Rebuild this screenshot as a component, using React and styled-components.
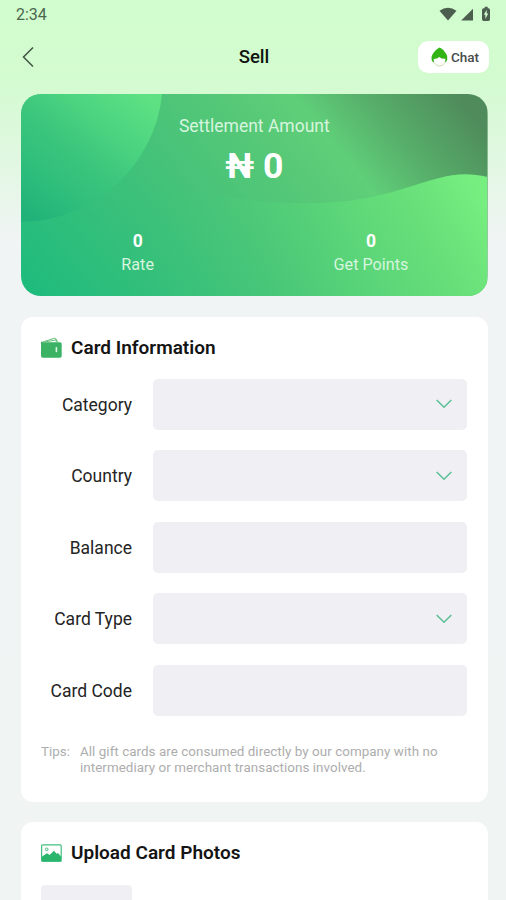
import React from "react";
import styled, { createGlobalStyle } from "styled-components";

const GlobalStyle = createGlobalStyle`
  * { box-sizing: border-box; }
  body {
    margin: 0;
    background: #f0f4f3;
    font-family: Roboto, "Liberation Sans", sans-serif;
    overflow: hidden;
  }
`;

const Screen = styled.div`
  height: 900px;
  overflow: hidden;
  background: linear-gradient(180deg, #d1fdcd 0, #d3fbd0 80px, #f0f4f4 240px, #f0f4f3 100%);
`;

const StatusBar = styled.div`
  height: 30px;
  display: flex;
  align-items: center;
  justify-content: space-between;
  padding: 0 15px 1px 16px;
  color: #4c6650;
  font-size: 16px;
`;

const StatusIcons = styled.svg`
  width: 54px;
  height: 18px;
  display: block;
`;

const Header = styled.header`
  height: 64px;
  display: grid;
  grid-template-columns: 100px 1fr 100px;
  align-items: center;
  padding: 0 17px 10px 20px;
`;

const BackIcon = styled.svg`
  width: 16px;
  height: 22px;
  display: block;
`;

const Title = styled.h1`
  margin: 0;
  padding-right: 1px;
  text-align: center;
  font-size: 18.6px;
  line-height: 22px;
  font-weight: 500;
  color: #101510;
`;

const ChatButton = styled.button`
  justify-self: end;
  width: 71px;
  height: 32px;
  border: 0;
  border-radius: 10px;
  background: #fff;
  display: flex;
  align-items: center;
  gap: 3px;
  padding: 0 0 0 13px;
  font: 500 13.5px Roboto, sans-serif;
  color: #474b4a;
`;

const ChatIcon = styled.svg`
  width: 17px;
  height: 20px;
  flex: none;
`;

const Amount = styled.section`
  position: relative;
  margin: 0 18.4px 0 21px;
  height: 202px;
  border-radius: 20px;
  overflow: hidden;
  color: #fff;
`;

const Backdrop = styled.svg`
  position: absolute;
  inset: 0;
  width: 100%;
  height: 100%;
`;

const AmountContent = styled.div`
  position: relative;
  text-align: center;
  padding-top: 21px;
`;

const AmountLabel = styled.div`
  font-size: 17.5px;
  line-height: 22px;
  color: #d7f5df;
`;

const AmountValue = styled.div`
  margin-top: 8px;
  font-size: 35.6px;
  line-height: 43px;
  font-weight: 700;
`;

const Stats = styled.div`
  margin-top: 41px;
  display: grid;
  grid-template-columns: 1fr 1fr;
`;

const StatValue = styled.div`
  font-size: 17.5px;
  line-height: 24px;
  font-weight: 700;
`;

const StatLabel = styled.div`
  font-size: 16.2px;
  line-height: 23px;
  color: #d7f5df;
`;

const Panel = styled.section`
  margin: ${(p) => p.$gap}px 18.4px 0 21px;
  height: ${(p) => p.$height}px;
  padding: 18px 20.6px 0 20px;
  background: #fff;
  border-radius: 12px;
`;

const PanelHeading = styled.div`
  display: flex;
  align-items: center;
  gap: 9px;
  height: 25px;
`;

const PanelIcon = styled.svg`
  width: 21px;
  height: 22px;
  flex: none;
`;

const PanelTitle = styled.h2`
  margin: 0;
  font-size: 19px;
  line-height: 25px;
  font-weight: 600;
  white-space: nowrap;
  color: #141414;
`;

const Fields = styled.div`
  display: grid;
  gap: 20.5px;
  margin-top: 18.5px;
`;

const FieldRow = styled.label`
  display: grid;
  grid-template-columns: 91px 1fr;
  column-gap: 21px;
  align-items: center;
  height: 51px;
  font-size: 17.5px;
  color: #242424;
  text-align: right;
`;

const FieldLabel = styled.span`
  padding-top: 1px;
`;

const FieldBox = styled.div`
  height: 51px;
  border-radius: 5px;
  background: #f0eff4;
  display: flex;
  align-items: center;
  justify-content: flex-end;
  padding-right: 14.6px;
`;

const Chevron = styled.svg`
  width: 16px;
  height: 10px;
`;

const Tips = styled.div`
  display: flex;
  margin-top: 28px;
  font-size: 13.4px;
  line-height: 16px;
  color: #adadad;
`;

const TipsLabel = styled.span`
  width: 39px;
  flex: none;
`;

const TipsText = styled.div`
  white-space: nowrap;
  letter-spacing: 0.05px;
`;

const UploadSlot = styled.div`
  width: 91px;
  height: 91px;
  margin-top: 20px;
  border-radius: 4px;
  background: #f0eff4;
`;

const fields = [
  { label: "Category", select: true },
  { label: "Country", select: true },
  { label: "Balance", select: false },
  { label: "Card Type", select: true },
  { label: "Card Code", select: false },
];

function CardBackdrop() {
  return (
    <Backdrop viewBox="0 0 467 202" preserveAspectRatio="none">
      <defs>
        <linearGradient id="base" gradientUnits="userSpaceOnUse" x1="0" y1="202" x2="376" y2="-111">
          <stop offset="0" stopColor="#1dbb7d" />
          <stop offset="0.42" stopColor="#48c379" />
          <stop offset="0.6" stopColor="#58c977" />
          <stop offset="0.69" stopColor="#5fcf79" />
          <stop offset="0.8" stopColor="#57af6a" />
          <stop offset="0.95" stopColor="#4f8b5b" />
        </linearGradient>
        <linearGradient id="wave" gradientUnits="userSpaceOnUse" x1="0" y1="202" x2="388" y2="-26">
          <stop offset="0" stopColor="#1dbb7d" />
          <stop offset="0.48" stopColor="#49c878" />
          <stop offset="0.85" stopColor="#68df79" />
          <stop offset="1" stopColor="#77ef80" />
        </linearGradient>
        <linearGradient id="orb" gradientUnits="userSpaceOnUse" x1="15" y1="128" x2="115" y2="-5">
          <stop offset="0" stopColor="#20b279" />
          <stop offset="1" stopColor="#5de183" />
        </linearGradient>
        <linearGradient id="orbEdge" gradientUnits="userSpaceOnUse" x1="30" y1="125" x2="141" y2="0">
          <stop offset="0" stopColor="#fff" />
          <stop offset="0.35" stopColor="#999" />
          <stop offset="0.6" stopColor="#fff" />
        </linearGradient>
        <linearGradient id="fade" gradientUnits="userSpaceOnUse" x1="100" y1="0" x2="330" y2="0">
          <stop offset="0" stopColor="#000" />
          <stop offset="1" stopColor="#fff" />
        </linearGradient>
        <mask id="waveMask" maskUnits="userSpaceOnUse" x="0" y="0" width="467" height="202">
          <rect width="467" height="202" fill="url(#fade)" />
        </mask>
        <mask id="orbMask" maskUnits="userSpaceOnUse" x="0" y="0" width="467" height="202">
          <rect width="467" height="202" fill="url(#orbEdge)" />
        </mask>
      </defs>
      <rect width="467" height="202" fill="url(#base)" />
      <path
        d="M0 100C90 80 170 100 250 108C320 112 352 104 385 94C420 83 438 76 467 83V202H0Z"
        fill="url(#wave)"
        mask="url(#waveMask)"
      />
      <circle cx="-1" cy="-15" r="143" fill="url(#orb)" mask="url(#orbMask)" />
    </Backdrop>
  );
}

export default function App() {
  return (
    <>
      <GlobalStyle />
      <Screen>
        <StatusBar>
          <span>2:34</span>
          <StatusIcons viewBox="0 0 54 18" fill="#4c5f4e">
            <path d="M2.5 4.7Q11-1 19.5 4.7L11 14.6Z" />
            <path d="M36 2.8V14.6H24.2Z" />
            <path fillRule="evenodd" d="M46.5 2.2H47.7V.8H50.7V2.2H51.5Q53 2.2 53 4V13Q53 15 51.5 15H46.5Q45 15 45 13V4Q45 2.2 46.5 2.2ZM49.7 3.8L46.8 8.8H48.4V12.9L51.2 7.6H49.7Z" />
          </StatusIcons>
        </StatusBar>
        <Header>
          <BackIcon viewBox="0 0 16 22" fill="none" stroke="#3e5341" strokeWidth="1.5">
            <path d="M13 1.5L3.5 11L13 20.5" />
          </BackIcon>
          <Title>Sell</Title>
          <ChatButton>
            <ChatIcon viewBox="0 0 17 20">
              <path d="M8.5.5C12 1.7 13.6 4.6 15.3 7.1Q16.7 9 16.3 12C16.1 14 15 14.8 13.8 15.5L3.2 15.5C1.3 14.8.4 13.2.5 10.9Q.5 9 2 6.6C3.2 4.2 5.8 2.3 8.5.5Z" fill="#31b414" />
              <path d="M2.7 11.9Q6.2 12 8.2 9.9Q10.6 12 14.3 11.8C14.8 15.5 12.1 18.5 8.6 18.5C5.2 18.5 2.3 15.6 2.7 11.9Z" fill="#fff" />
              <path d="M3.5 16.2Q6 19.3 8.7 19.1Q11.5 19 13.5 16.4" fill="none" stroke="#c3d99f" strokeWidth=".9" />
            </ChatIcon>
            Chat
          </ChatButton>
        </Header>
        <Amount>
          <CardBackdrop />
          <AmountContent>
            <AmountLabel>Settlement Amount</AmountLabel>
            <AmountValue>₦ 0</AmountValue>
            <Stats>
              <div>
                <StatValue>0</StatValue>
                <StatLabel>Rate</StatLabel>
              </div>
              <div>
                <StatValue>0</StatValue>
                <StatLabel>Get Points</StatLabel>
              </div>
            </Stats>
          </AmountContent>
        </Amount>
        <Panel $gap={21} $height={485}>
          <PanelHeading>
            <PanelIcon viewBox="0 0 21 22" fill="none">
              <path d="M1.2 5.2L13.5 1.2L15.2 2V5" stroke="#64bd79" strokeWidth="1" />
              <path d="M4 5L15.5 2.8L16.5 5" stroke="#64bd79" strokeWidth="1" />
              <path d="M0 4.5L2 5.3H19Q20.7 5.3 20.7 7V19Q20.7 20.7 19 20.7H2Q0 20.7 0 19Z" fill="#3bb264" />
              <rect x="14.6" y="10" width="1.6" height="5.2" rx=".7" fill="#dff3e5" />
            </PanelIcon>
            <PanelTitle>Card Information</PanelTitle>
          </PanelHeading>
          <Fields>
            {fields.map((f) => (
              <FieldRow key={f.label}>
                <FieldLabel>{f.label}</FieldLabel>
                <FieldBox>
                  {f.select && (
                    <Chevron viewBox="0 0 16 10" fill="none" stroke="#5dbf98" strokeWidth="1.6">
                      <path d="M.7 1L8 8.2L15.3 1" />
                    </Chevron>
                  )}
                </FieldBox>
              </FieldRow>
            ))}
          </Fields>
          <Tips>
            <TipsLabel>Tips:</TipsLabel>
            <TipsText>
              All gift cards are consumed directly by our company with no
              <br />
              intermediary or merchant transactions involved.
            </TipsText>
          </Tips>
        </Panel>
        <Panel $gap={20} $height={200}>
          <PanelHeading>
            <PanelIcon viewBox="0 0 21 22" fill="none">
              <rect x=".6" y="2.8" width="19.6" height="16.6" rx="1" stroke="#44bd80" strokeWidth="1.2" />
              <path d="M1 14.5L6 11.3L8.5 13L13 8.8L15.5 11.8L17 11L20 14.5V19H1Z" fill="#29b66c" />
              <circle cx="5.7" cy="7.3" r="1.3" stroke="#44bd80" />
            </PanelIcon>
            <PanelTitle>Upload Card Photos</PanelTitle>
          </PanelHeading>
          <UploadSlot />
        </Panel>
      </Screen>
    </>
  );
}
